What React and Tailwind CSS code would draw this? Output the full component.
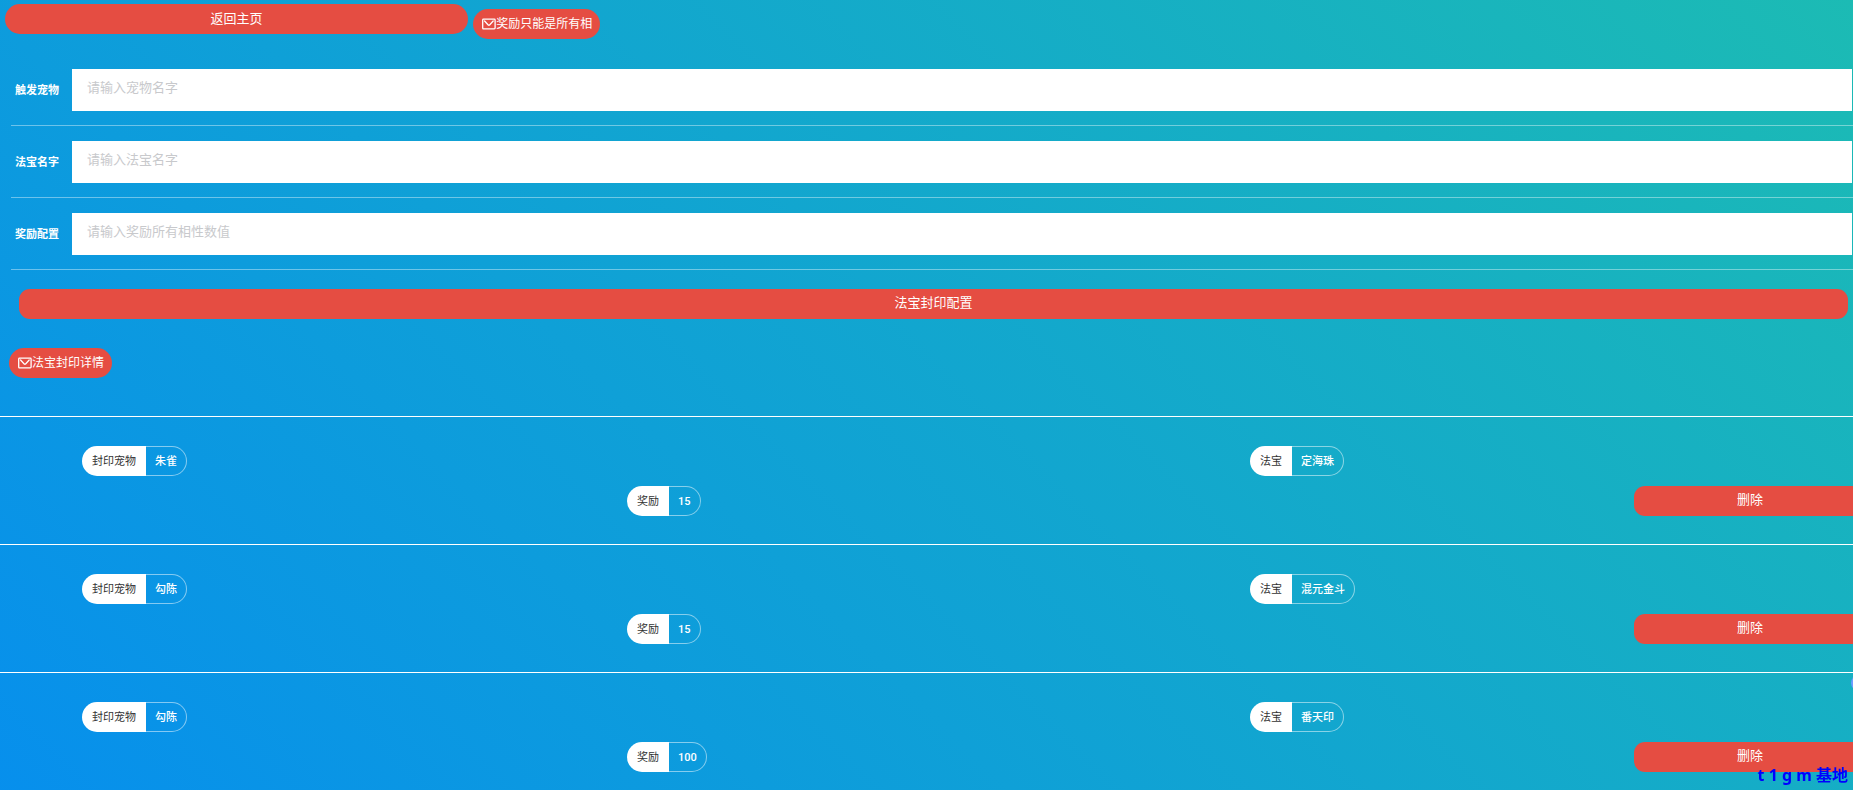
import React from "react";

const fields = [
  { id: "pet", label: "触发宠物", placeholder: "请输入宠物名字" },
  { id: "treasure", label: "法宝名字", placeholder: "请输入法宝名字" },
  { id: "reward", label: "奖励配置", placeholder: "请输入奖励所有相性数值" },
];

const records = [
  { pet: "朱雀", treasure: "定海珠", reward: "15" },
  { pet: "勾陈", treasure: "混元金斗", reward: "15" },
  { pet: "勾陈", treasure: "番天印", reward: "100" },
];

function MailIcon() {
  return (
    <svg className="h-3 w-3.5 shrink-0" viewBox="0 0 14 12" fill="none" stroke="currentColor" aria-hidden="true">
      <rect x="0.7" y="1.1" width="12.4" height="9.8" rx="0.8" strokeWidth="1.3" />
      <path d="M2.6 3 6.2 7q.7.5 1.4 0L11.2 3" strokeWidth="1.3" strokeLinecap="round" />
    </svg>
  );
}

function Badge({ children }) {
  return (
    <span className="inline-flex h-[30px] items-center rounded-full bg-[#e54d42] pr-2 pl-[9px] text-xs">
      <MailIcon />
      {children}
    </span>
  );
}

function Tag({ name, value }) {
  return (
    <div className="inline-flex h-[30px] text-[11px]">
      <span className="flex items-center rounded-l-full bg-white px-2.5 pt-px text-[#333333]">{name}</span>
      <span className="flex items-center rounded-r-full border border-l-0 border-white/50 px-[9px] pt-0.5 font-['Roboto','Noto_Sans_CJK_SC',sans-serif] font-medium">
        {value}
      </span>
    </div>
  );
}

export default function App() {
  return (
    <main className="relative min-h-screen overflow-hidden bg-[linear-gradient(45deg,#0081ff_-32%,#1cbbb4_100%)] font-['Noto_Sans','Noto_Sans_CJK_SC',sans-serif] text-white">
      <header className="flex items-start gap-[5px] pt-1">
        <button type="button" className="ml-[5px] h-[30px] w-1/4 rounded-[15px] bg-[#e54d42] text-[13px]">
          返回主页
        </button>
        <div className="pt-[5px]">
          <Badge>奖励只能是所有相</Badge>
        </div>
      </header>

      <form className="pt-[15px]" onSubmit={(e) => e.preventDefault()}>
        {fields.map((f) => (
          <div key={f.id} className="ml-[11px] flex h-[72px] items-center border-b border-white/40 pr-px pl-1">
            <label htmlFor={f.id} className="w-[57px] shrink-0 pt-0.5 text-[11px] font-bold">
              {f.label}
            </label>
            <input
              id={f.id}
              type="text"
              placeholder={f.placeholder}
              className="h-[42px] min-w-0 flex-1 bg-white px-[15px] pb-1.5 text-[13px] text-[#333333] outline-none placeholder:text-[#c8c9cc]"
            />
          </div>
        ))}
        <div className="pt-[19px] pr-[5px] pl-[19px]">
          <button type="submit" className="h-[30px] w-full rounded-[11px] bg-[#e54d42] pb-0.5 text-[13px]">
            法宝封印配置
          </button>
        </div>
      </form>

      <div className="flex h-[97px] pt-[29px] pl-[9px]">
        <Badge>法宝封印详情</Badge>
      </div>

      <ul>
        {records.map((r, i) => (
          <li
            key={i}
            className="grid h-32 grid-cols-[627fr_623fr_384fr_219fr] items-start border-t border-white pt-[29px]"
          >
            <div className="pl-[82px]">
              <Tag name="封印宠物" value={r.pet} />
            </div>
            <div className="pt-10">
              <Tag name="奖励" value={r.reward} />
            </div>
            <Tag name="法宝" value={r.treasure} />
            <div className="-mr-[13px] pt-10">
              <button type="button" className="h-[30px] w-full rounded-[11px] bg-[#e54d42] pb-0.5 text-[13px]">
                删除
              </button>
            </div>
          </li>
        ))}
      </ul>

      <span className="fixed top-[675px] -right-3.5 size-4 rounded-full bg-[#6e9bff]" />
      <span className="fixed right-[5px] bottom-[3px] text-base font-bold text-[#0000ff]">t 1 g m 基地</span>
    </main>
  );
}
